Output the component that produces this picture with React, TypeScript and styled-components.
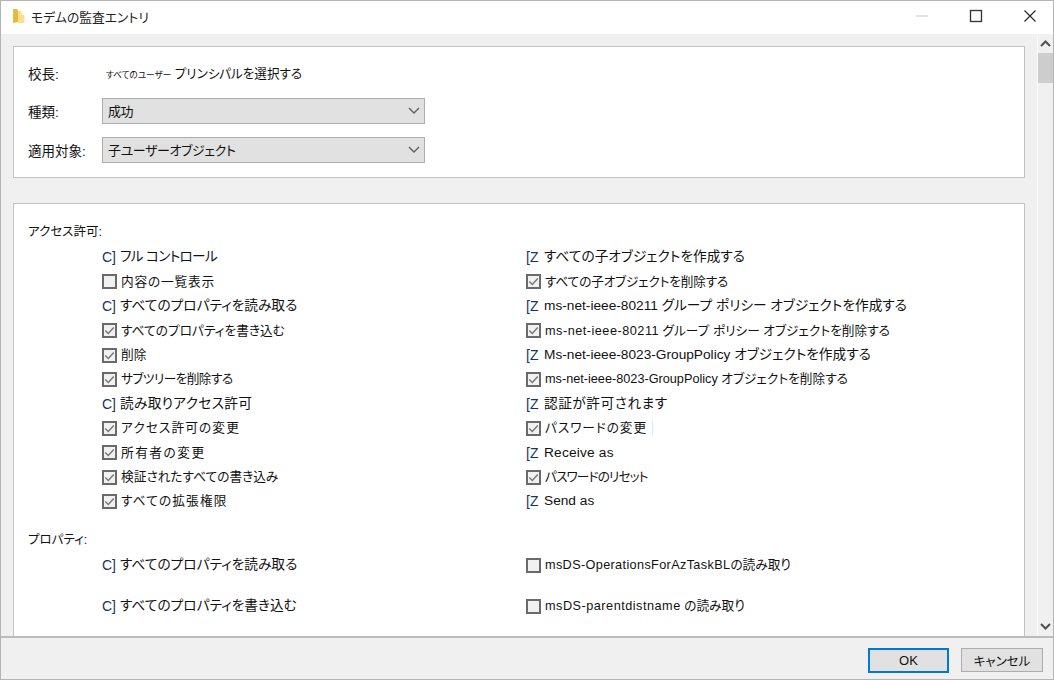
import styled, { createGlobalStyle } from "styled-components";

type Mark = "c" | "z" | "on" | "off";

interface Perm {
  mark: Mark;
  label: string;
  latin?: string;
  spread?: number;
  caret?: boolean;
}

const accessRows: [Perm, Perm][] = [
  [
    { mark: "c", label: "フル コントロール", spread: -0.7 },
    { mark: "z", label: "すべての子オブジェクトを作成する" },
  ],
  [
    { mark: "off", label: "内容の一覧表示", spread: 0.8 },
    { mark: "on", label: "すべての子オブジェクトを削除する", spread: -0.2 },
  ],
  [
    { mark: "c", label: "すべてのプロパティを読み取る" },
    { mark: "z", label: "ms-net-ieee-80211 グループ ポリシー オブジェクトを作成する" },
  ],
  [
    { mark: "on", label: "すべてのプロパティを書き込む" },
    { mark: "on", latin: "ms-net-ieee-80211", spread: 0.5, label: " グループ ポリシー オブジェクトを削除する" },
  ],
  [
    { mark: "on", label: "削除" },
    { mark: "z", label: "Ms-net-ieee-8023-GroupPolicy オブジェクトを作成する" },
  ],
  [
    { mark: "on", label: "サブツリーを削除する", spread: -0.6 },
    { mark: "on", label: "ms-net-ieee-8023-GroupPolicy オブジェクトを削除する" },
  ],
  [
    { mark: "c", label: "読み取りアクセス許可", spread: 0.3 },
    { mark: "z", label: "認証が許可されます", spread: 0.5 },
  ],
  [
    { mark: "on", label: "アクセス許可の変更", spread: 1.1 },
    { mark: "on", label: "パスワードの変更", spread: 0.9, caret: true },
  ],
  [
    { mark: "on", label: "所有者の変更", spread: 1.5 },
    { mark: "z", label: "Receive as", spread: 0.2 },
  ],
  [
    { mark: "on", label: "検証されたすべての書き込み" },
    { mark: "on", label: "パスワードのリセット", spread: -0.9 },
  ],
  [
    { mark: "on", label: "すべての拡張権限", spread: 1.1 },
    { mark: "z", label: "Send as" },
  ],
];

const propertyRows: [Perm, Perm][] = [
  [
    { mark: "c", label: "すべてのプロパティを読み取る" },
    { mark: "off", latin: "msDS-OperationsForAzTaskBL", spread: 0.35, label: "の読み取り" },
  ],
  [
    { mark: "c", label: "すべてのプロパティを書き込む" },
    { mark: "off", latin: "msDS-parentdistname", spread: 0.5, label: " の読み取り" },
  ],
];

const GlobalStyle = createGlobalStyle`
  html, body {
    margin: 0;
    padding: 0;
    background: #f0f0f0;
  }
  * {
    box-sizing: border-box;
  }
`;

const Chevron = () => (
  <svg width="12" height="7" viewBox="0 0 12 7" fill="none">
    <path d="M1 1l5 5 5-5" stroke="#5f5f5f" strokeWidth="1.4" />
  </svg>
);

const PermRow = ({ perm }: { perm: Perm }) => {
  const boxed = perm.mark === "on" || perm.mark === "off";
  return (
    <PermItem>
      {boxed ? (
        <CheckBox>
          {perm.mark === "on" && (
            <svg width="13" height="13" viewBox="0 0 13 13" fill="none">
              <path d="M1.5 6.5l3.6 3.6L11.5 3" stroke="#777" strokeWidth="1.7" />
            </svg>
          )}
        </CheckBox>
      ) : (
        <Glyph>{perm.mark === "c" ? "C]" : "[Z"}</Glyph>
      )}
      {perm.latin ? (
        <PermLabel $large={!boxed}>
          <Spaced $spread={perm.spread ?? 0}>{perm.latin}</Spaced>
          {perm.label}
        </PermLabel>
      ) : (
        <PermLabel $large={!boxed}>
          <Spaced $spread={perm.spread ?? 0}>{perm.label}</Spaced>
        </PermLabel>
      )}
      {perm.caret && <Caret />}
    </PermItem>
  );
};

const App = () => {
  return (
    <Window>
      <GlobalStyle />
      <TitleBar>
        <TitleLeft>
          <svg width="12" height="16" viewBox="0 0 12 16">
            <path d="M0 1h4l1 2v11l-5 1z" fill="#e8b93f" />
            <path d="M5 3h3l1 4h2.5v8H5z" fill="#fbe08c" />
          </svg>
          <TitleText>モデムの監査エントリ</TitleText>
        </TitleLeft>
        <WindowControls>
          <ControlButton>
            <svg width="14" height="12" viewBox="0 0 14 12">
              <path d="M1 6h12" stroke="#cfcfcf" strokeWidth="1.2" />
            </svg>
          </ControlButton>
          <ControlButton>
            <svg width="14" height="14" viewBox="0 0 14 14" fill="none">
              <rect x="1.5" y="1.5" width="11" height="11" stroke="#333" strokeWidth="1.3" />
            </svg>
          </ControlButton>
          <ControlButton>
            <svg width="14" height="14" viewBox="0 0 14 14" fill="none">
              <path d="M1.5 1.5l11 11M12.5 1.5l-11 11" stroke="#222" strokeWidth="1.1" />
            </svg>
          </ControlButton>
        </WindowControls>
      </TitleBar>

      <Body>
        <Content>
          <TopPanel>
            <FieldRow $height={24}>
              <FieldLabel>校長:</FieldLabel>
              <PrincipalLink>
                <small>すべてのユーザー</small> プリンシパルを選択する
              </PrincipalLink>
            </FieldRow>
            <FieldRow $height={26}>
              <FieldLabel>種類:</FieldLabel>
              <SelectBox>
                成功
                <Chevron />
              </SelectBox>
            </FieldRow>
            <FieldRow $height={26}>
              <FieldLabel>適用対象:</FieldLabel>
              <SelectBox>
                子ユーザーオブジェクト
                <Chevron />
              </SelectBox>
            </FieldRow>
          </TopPanel>

          <MainPanel>
            <SectionTitle>アクセス許可:</SectionTitle>
            <PermGrid>
              {accessRows.map((pair, i) => (
                <PermPair key={i}>
                  <PermRow perm={pair[0]} />
                  <PermRow perm={pair[1]} />
                </PermPair>
              ))}
            </PermGrid>
            <SectionTitle $top={15}>プロパティ:</SectionTitle>
            <PropGrid>
              {propertyRows.map((pair, i) => (
                <PermPair key={i}>
                  <PermRow perm={pair[0]} />
                  <PermRow perm={pair[1]} />
                </PermPair>
              ))}
            </PropGrid>
          </MainPanel>
        </Content>

        <ScrollBar>
          <ScrollArrow>
            <svg width="11" height="7" viewBox="0 0 11 7" fill="none">
              <path d="M1 6l4.5-4.5L10 6" stroke="#505050" strokeWidth="2" />
            </svg>
          </ScrollArrow>
          <ScrollThumb />
          <ScrollTrack />
          <ScrollArrow>
            <svg width="11" height="7" viewBox="0 0 11 7" fill="none">
              <path d="M1 1l4.5 4.5L10 1" stroke="#505050" strokeWidth="2" />
            </svg>
          </ScrollArrow>
        </ScrollBar>
      </Body>

      <Footer>
        <OkButton>OK</OkButton>
        <CancelButton>キャンセル</CancelButton>
      </Footer>
    </Window>
  );
};

const Window = styled.div`
  width: 1054px;
  height: 680px;
  display: flex;
  flex-direction: column;
  overflow: hidden;
  background: #f0f0f0;
  border: 1px solid #b4b4b4;
  font-family: "Liberation Sans", "Noto Sans CJK JP", sans-serif;
  font-feature-settings: "palt";
  color: #111;
`;

const TitleBar = styled.div`
  height: 33px;
  flex: none;
  display: flex;
  align-items: center;
  justify-content: space-between;
  padding: 0 0 3px 12px;
  background: #fff;
`;

const TitleLeft = styled.div`
  display: flex;
  align-items: center;
  gap: 6px;
`;

const TitleText = styled.span`
  font-size: 12.8px;
  color: #222;
`;

const WindowControls = styled.div`
  display: flex;
  gap: 8px;
`;

const ControlButton = styled.div`
  width: 46px;
  height: 28px;
  display: flex;
  align-items: center;
  justify-content: center;
`;

const Body = styled.div`
  flex: 1;
  min-height: 0;
  display: flex;
`;

const Content = styled.div`
  flex: 1;
  min-width: 0;
  overflow: hidden;
  padding: 12px 12px 0 12px;
  display: flex;
  flex-direction: column;
  gap: 25px;
`;

const Panel = styled.section`
  background: #fff;
  border: 1.5px solid #c3c3c3;
`;

const TopPanel = styled(Panel)`
  height: 132px;
  flex: none;
  padding: 13.5px 0 0 14px;
  display: flex;
  flex-direction: column;
  gap: 13px;
`;

const FieldRow = styled.div<{ $height: number }>`
  height: ${(p) => p.$height}px;
  display: flex;
  align-items: center;
`;

const FieldLabel = styled.span`
  width: 74px;
  flex: none;
  font-size: 13.5px;
`;

const PrincipalLink = styled.span`
  font-size: 12.6px;
  padding-left: 4px;

  small {
    font-size: 8.6px;
  }
`;

const SelectBox = styled.div`
  width: 323px;
  height: 26px;
  display: flex;
  align-items: center;
  justify-content: space-between;
  padding: 0 4px 0 5px;
  background: #e1e1e1;
  border: 1.5px solid #adadad;
  font-size: 13px;
  letter-spacing: -0.4px;
`;

const MainPanel = styled(Panel)`
  flex: 1;
  min-height: 0;
  border-bottom: none;
  padding: 16px 0 0 14px;
`;

const SectionTitle = styled.div<{ $top?: number }>`
  height: 20px;
  margin-top: ${(p) => p.$top ?? 0}px;
  display: flex;
  align-items: center;
  font-size: 12.5px;
`;

const PermGrid = styled.div`
  display: grid;
  grid-auto-rows: 24.4px;
  padding-left: 74px;
  margin-top: 5.3px;
`;

const PropGrid = styled.div`
  display: grid;
  grid-auto-rows: 41px;
  padding-left: 74px;
  margin-top: -4px;
`;

const PermPair = styled.div`
  display: grid;
  grid-template-columns: 424px 1fr;
  align-items: center;
`;

const PermItem = styled.div`
  display: flex;
  align-items: center;
  min-width: 0;
  white-space: pre;
`;

const CheckBox = styled.span`
  width: 15px;
  height: 15px;
  flex: none;
  margin-right: 4px;
  display: flex;
  align-items: center;
  justify-content: center;
  background: #f1f1f1;
  border: 2px solid #6a6a6a;
`;

const Glyph = styled.span`
  width: 18px;
  flex: none;
  font-size: 14px;
  color: #16345e;
`;

const PermLabel = styled.span<{ $large: boolean }>`
  font-size: ${(p) => (p.$large ? 13.7 : 12.7)}px;
  line-height: 20px;
`;

const Spaced = styled.span<{ $spread: number }>`
  letter-spacing: ${(p) => p.$spread}px;
`;

const Caret = styled.span`
  width: 1px;
  height: 14px;
  margin-left: 5px;
  background: #d4e8f6;
`;

const ScrollBar = styled.div`
  width: 16px;
  flex: none;
  display: flex;
  flex-direction: column;
  background: #f0f0f0;
  border-left: 1px solid #fafafa;
`;

const ScrollArrow = styled.div`
  height: 19px;
  flex: none;
  display: flex;
  align-items: center;
  justify-content: center;
`;

const ScrollThumb = styled.div`
  height: 30px;
  flex: none;
  background: #cdcdcd;
`;

const ScrollTrack = styled.div`
  flex: 1;
`;

const Footer = styled.div`
  height: 43px;
  flex: none;
  display: flex;
  align-items: flex-start;
  justify-content: flex-end;
  gap: 12px;
  padding: 10px 10px 0 0;
  background: #f0f0f0;
  border-top: 2px solid #bcbcbc;
`;

const OkButton = styled.button`
  width: 81px;
  height: 25px;
  padding: 0;
  background: #e1e1e1;
  border: 2px solid #0078d7;
  font-family: "Liberation Sans", sans-serif;
  font-size: 13px;
  color: #111;
`;

const CancelButton = styled.button`
  width: 82px;
  height: 24px;
  padding: 0;
  background: #e1e1e1;
  border: 1.5px solid #adadad;
  font-family: "Noto Sans CJK JP", sans-serif;
  font-feature-settings: "palt";
  font-size: 12.5px;
  color: #111;
`;

export default App;
